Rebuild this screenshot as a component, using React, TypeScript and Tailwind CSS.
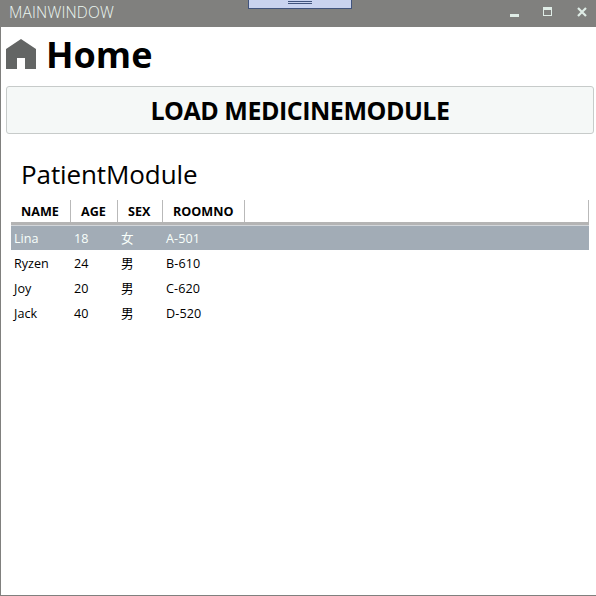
import React from "react";

type Patient = { name: string; age: number; sex: string; room: string };

const patients: Patient[] = [
  { name: "Lina", age: 18, sex: "女", room: "A-501" },
  { name: "Ryzen", age: 24, sex: "男", room: "B-610" },
  { name: "Joy", age: 20, sex: "男", room: "C-620" },
  { name: "Jack", age: 40, sex: "男", room: "D-520" },
];

function TitleBar() {
  return (
    <header className="relative flex h-[27px] shrink-0 items-start justify-between bg-[#80807e] text-[#dfece6]">
      <span className="pl-[9px] text-[15.5px] leading-[25px] font-light tracking-[0.16px] text-[#edf8f3]">MAINWINDOW</span>
      <svg className="h-[27px] w-[96px]" viewBox="0 0 96 27" shapeRendering="crispEdges" fill="none">
        <path d="M10 14h9v3h-9z" fill="currentColor" />
        <path d="M43 7h9v9h-9zM44 10v5h7v-5z" fill="currentColor" fillRule="evenodd" />
        <path d="M78 8l8 8M86 8l-8 8" stroke="currentColor" strokeWidth="2.2" shapeRendering="auto" />
      </svg>
      <div className="absolute top-0 left-[248px] flex h-[9px] w-[104px] flex-col items-center gap-px border border-t-0 border-[#41547d] bg-[#c9d3ef] pt-px">
        <div className="h-px w-6 bg-[#41547d]" />
        <div className="h-px w-6 bg-[#41547d]" />
      </div>
    </header>
  );
}

function PatientTable() {
  const head = "h-[22px] border-r border-[#b9b9b9] pl-[10px] leading-[24px]";
  return (
    <div className="mr-[7px] ml-[10px] text-[12.6px]">
      <div className="flex border-b-3 border-[#b4b4b4] font-bold">
        <div className={head + " w-[60px]"}>NAME</div>
        <div className={head + " w-[47px]"}>AGE</div>
        <div className={head + " w-[45px]"}>SEX</div>
        <div className={head + " w-[82px]"}>ROOMNO</div>
        <div className="h-[22px] flex-1 border-r border-[#b9b9b9]" />
      </div>
      <div className="h-px bg-[#d2d6da]" />
      {patients.map((p, i) => (
        <div
          key={p.name}
          className={
            "flex pl-[3px] leading-[25px] " +
            (i === 0 ? "mb-px h-6 bg-[#a2acb6] text-[#f8fffb]" : "h-[25px] text-black")
          }
        >
          <span className="w-[60px]">{p.name}</span>
          <span className="w-[47px]">{p.age}</span>
          <span className="w-[45px]">{p.sex}</span>
          <span className="tracking-[0.1px]">{p.room}</span>
        </div>
      ))}
    </div>
  );
}

export default function App() {
  return (
    <div className="flex h-[596px] w-[596px] flex-col overflow-hidden border-b border-[#80807e] bg-white font-['Open_Sans','Noto_Sans_CJK_SC',sans-serif] text-black">
      <TitleBar />
      <main className="flex flex-1 flex-col border-l border-[#80807e]">
        <div className="flex h-[59px] items-start pl-[5px]">
          <svg className="mt-3 h-[30px] w-[30px]" viewBox="0 0 30 30">
            <path d="M15 0L30 10V30H19V19H11V30H0V10z" fill="#636564" />
          </svg>
          <h1 className="ml-[10px] text-[36px] leading-[55px] font-bold">Home</h1>
        </div>
        <button className="mr-[2px] ml-[5px] h-12 rounded-[3px] border border-[#c7cbca] bg-[#f5f8f7] text-[25px] leading-[46px] font-bold tracking-[-0.48px]">
          LOAD MEDICINEMODULE
        </button>
        <h2 className="mt-5 h-[46px] pl-5 text-[26px] leading-[40px] tracking-[-0.1px]">PatientModule</h2>
        <PatientTable />
      </main>
    </div>
  );
}
